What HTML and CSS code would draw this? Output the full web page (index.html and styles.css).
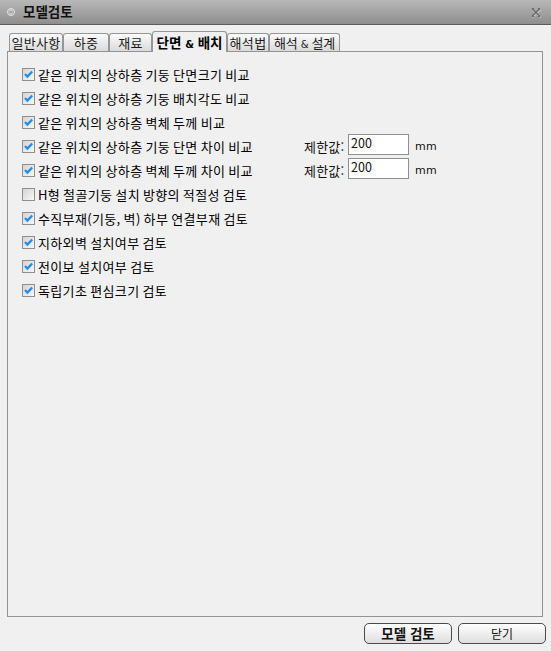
FILE: index.html
```html
<!DOCTYPE html>
<html lang="ko">
<head>
<meta charset="utf-8">
<title>모델검토</title>
<link rel="stylesheet" href="styles.css">
</head>
<body>
<div class="titlebar">
  <svg class="ticon" width="8" height="10" viewBox="0 0 8 10">
    <circle cx="4" cy="5" r="3.5" fill="none" stroke="#e8e8e8" stroke-width="1"/>
    <path d="M2.3 4.2 L4 2.6 L5.7 4.2 M2.3 5.8 L4 7.4 L5.7 5.8" fill="none" stroke="#e8e8e8" stroke-width="1"/>
  </svg>
  <span class="title">모델검토</span>
  <svg class="close" width="11" height="11" viewBox="0 0 11 11">
    <path d="M1.5 2.5 L9.5 10.5 M9.5 2.5 L1.5 10.5" stroke="#d0d0d0" stroke-width="1.4"/>
    <path d="M1 1.5 L9 9.5 M9 1.5 L1 9.5" stroke="#6a6a6a" stroke-width="1.4"/>
    <path d="M1 1.5 H3 M7 1.5 H9 M1 9.5 H3 M7 9.5 H9" stroke="#6a6a6a" stroke-width="1"/>
  </svg>
</div>

<div class="tabs">
  <div class="tab w1">일반사항</div>
  <div class="tab w2">하중</div>
  <div class="tab w3">재료</div>
  <div class="tab active w4">단면 <span class="amp">&amp;</span> 배치</div>
  <div class="tab w5">해석법</div>
  <div class="tab w6">해석 <span class="amp-s">&amp;</span> 설계</div>
</div>

<div class="panel">
  <div class="row"><span class="cb on"></span><span class="lbl">같은 위치의 상하층 기둥 단면크기 비교</span></div>
  <div class="row"><span class="cb on"></span><span class="lbl">같은 위치의 상하층 기둥 배치각도 비교</span></div>
  <div class="row"><span class="cb on"></span><span class="lbl">같은 위치의 상하층 벽체 두께 비교</span></div>
  <div class="row">
    <div class="opt"><span class="cb on"></span><span class="lbl">같은 위치의 상하층 기둥 단면 차이 비교</span></div>
    <span class="lim">제한값:</span><span class="inp">200</span><span class="unit">mm</span>
  </div>
  <div class="row">
    <div class="opt"><span class="cb on"></span><span class="lbl">같은 위치의 상하층 벽체 두께 차이 비교</span></div>
    <span class="lim">제한값:</span><span class="inp">200</span><span class="unit">mm</span>
  </div>
  <div class="row"><span class="cb"></span><span class="lbl">H형 철골기둥 설치 방향의 적절성 검토</span></div>
  <div class="row"><span class="cb on"></span><span class="lbl">수직부재(기둥, 벽) 하부 연결부재 검토</span></div>
  <div class="row"><span class="cb on"></span><span class="lbl">지하외벽 설치여부 검토</span></div>
  <div class="row"><span class="cb on"></span><span class="lbl">전이보 설치여부 검토</span></div>
  <div class="row"><span class="cb on"></span><span class="lbl">독립기초 편심크기 검토</span></div>
</div>

<div class="footer">
  <button class="btn bold">모델 검토</button>
  <button class="btn">닫기</button>
</div>
</body>
</html>
```

FILE: styles.css
```css
html, body {
  margin: 0;
  padding: 0;
}
body {
  width: 551px;
  height: 651px;
  background: #f0f0f0;
  font-family: "Noto Sans CJK KR", "Noto Sans", sans-serif;
  font-size: 12px;
  color: #111;
  overflow: hidden;
}

.titlebar {
  box-sizing: border-box;
  height: 25px;
  background: linear-gradient(#b8b8b8, #8e8e8e);
  border-bottom: 1px solid #5c5c5c;
  display: flex;
  align-items: center;
  padding-left: 7px;
  padding-right: 9px;
}
.ticon {
  margin-right: 8px;
}
.title {
  font-weight: bold;
  font-size: 13.5px;
  color: #111;
  flex: 1;
  line-height: 1;
}
.close {
  display: block;
}

.tabs {
  margin-top: 6px;
  height: 20px;
  padding-left: 9px;
  display: flex;
  align-items: flex-end;
}
.tab {
  box-sizing: border-box;
  height: 18px;
  border: 1px solid #969696;
  border-bottom: none;
  border-radius: 3px 3px 0 0;
  background: linear-gradient(#fbfbfb, #dadada);
  text-align: center;
  line-height: 17px;
  font-size: 13px;
  letter-spacing: 0.3px;
  color: #1a1a1a;
  white-space: nowrap;
}
.tab.active {
  height: 21px;
  margin-bottom: -1px;
  background: #f0f0f0;
  font-weight: bold;
  font-size: 13.5px;
  letter-spacing: 0;
  color: #000;
  line-height: 20px;
  position: relative;
  z-index: 1;
}
.amp {
  font-family: "DejaVu Sans", sans-serif;
  font-size: 10px;
  font-weight: bold;
}
.amp-s {
  font-family: "DejaVu Sans", sans-serif;
  font-size: 10px;
}
.w1 { width: 54px; }
.w2 { width: 46px; }
.w3 { width: 43px; }
.w4 { width: 75px; }
.w5 { width: 42px; }
.w6 { width: 71px; letter-spacing: -0.3px; }

.panel {
  box-sizing: border-box;
  margin: 0 8px 0 7px;
  height: 566px;
  border: 1px solid #939393;
  padding: 10px 0 0 14px;
}
.row {
  height: 24px;
  display: flex;
  align-items: center;
}
.opt {
  width: 282px;
  display: flex;
  align-items: center;
}
.cb {
  box-sizing: border-box;
  width: 13px;
  height: 13px;
  border: 1px solid #8d8f91;
  background: linear-gradient(135deg, #d4d4d4, #f8f8f8);
  margin-right: 3px;
  flex: none;
}
.cb.on {
  background:
    url("data:image/svg+xml,%3Csvg xmlns='http://www.w3.org/2000/svg' width='11' height='11' viewBox='0 0 11 11'%3E%3Cpath d='M2 5 L4.4 7.6 L9.2 2.4' fill='none' stroke='%23218ceb' stroke-width='2.2'/%3E%3C/svg%3E") center / 11px 11px no-repeat,
    linear-gradient(135deg, #d4d4d4, #f8f8f8);
}
.lbl {
  font-size: 13px;
  letter-spacing: 0.35px;
  word-spacing: -1px;
  white-space: nowrap;
  line-height: 1;
  color: #000;
}
.lim {
  width: 42px;
  font-size: 13px;
  letter-spacing: 0.2px;
  white-space: nowrap;
  flex: none;
}
.inp {
  box-sizing: border-box;
  width: 61px;
  height: 21px;
  margin-left: 2px;
  margin-top: -3px;
  border: 1px solid #8f8f8f;
  background: #fff;
  padding: 1px 0 0 2px;
  line-height: 14px;
  font-size: 12.5px;
}
.unit {
  margin-left: 6px;
  font-family: "DejaVu Sans", sans-serif;
  font-size: 11px;
  letter-spacing: 0.3px;
}

.footer {
  display: flex;
  justify-content: flex-end;
  gap: 6px;
  padding: 6px 5px 0 0;
}
.btn {
  box-sizing: border-box;
  width: 88px;
  height: 21px;
  border: 1px solid #4a4a4a;
  border-radius: 5px;
  background: linear-gradient(#ffffff, #dedede);
  font-family: "Noto Sans CJK KR", "Noto Sans", sans-serif;
  font-size: 12px;
  color: #111;
  padding: 0;
  line-height: 1;
}
.btn.bold {
  font-weight: bold;
  font-size: 13.5px;
}
```
